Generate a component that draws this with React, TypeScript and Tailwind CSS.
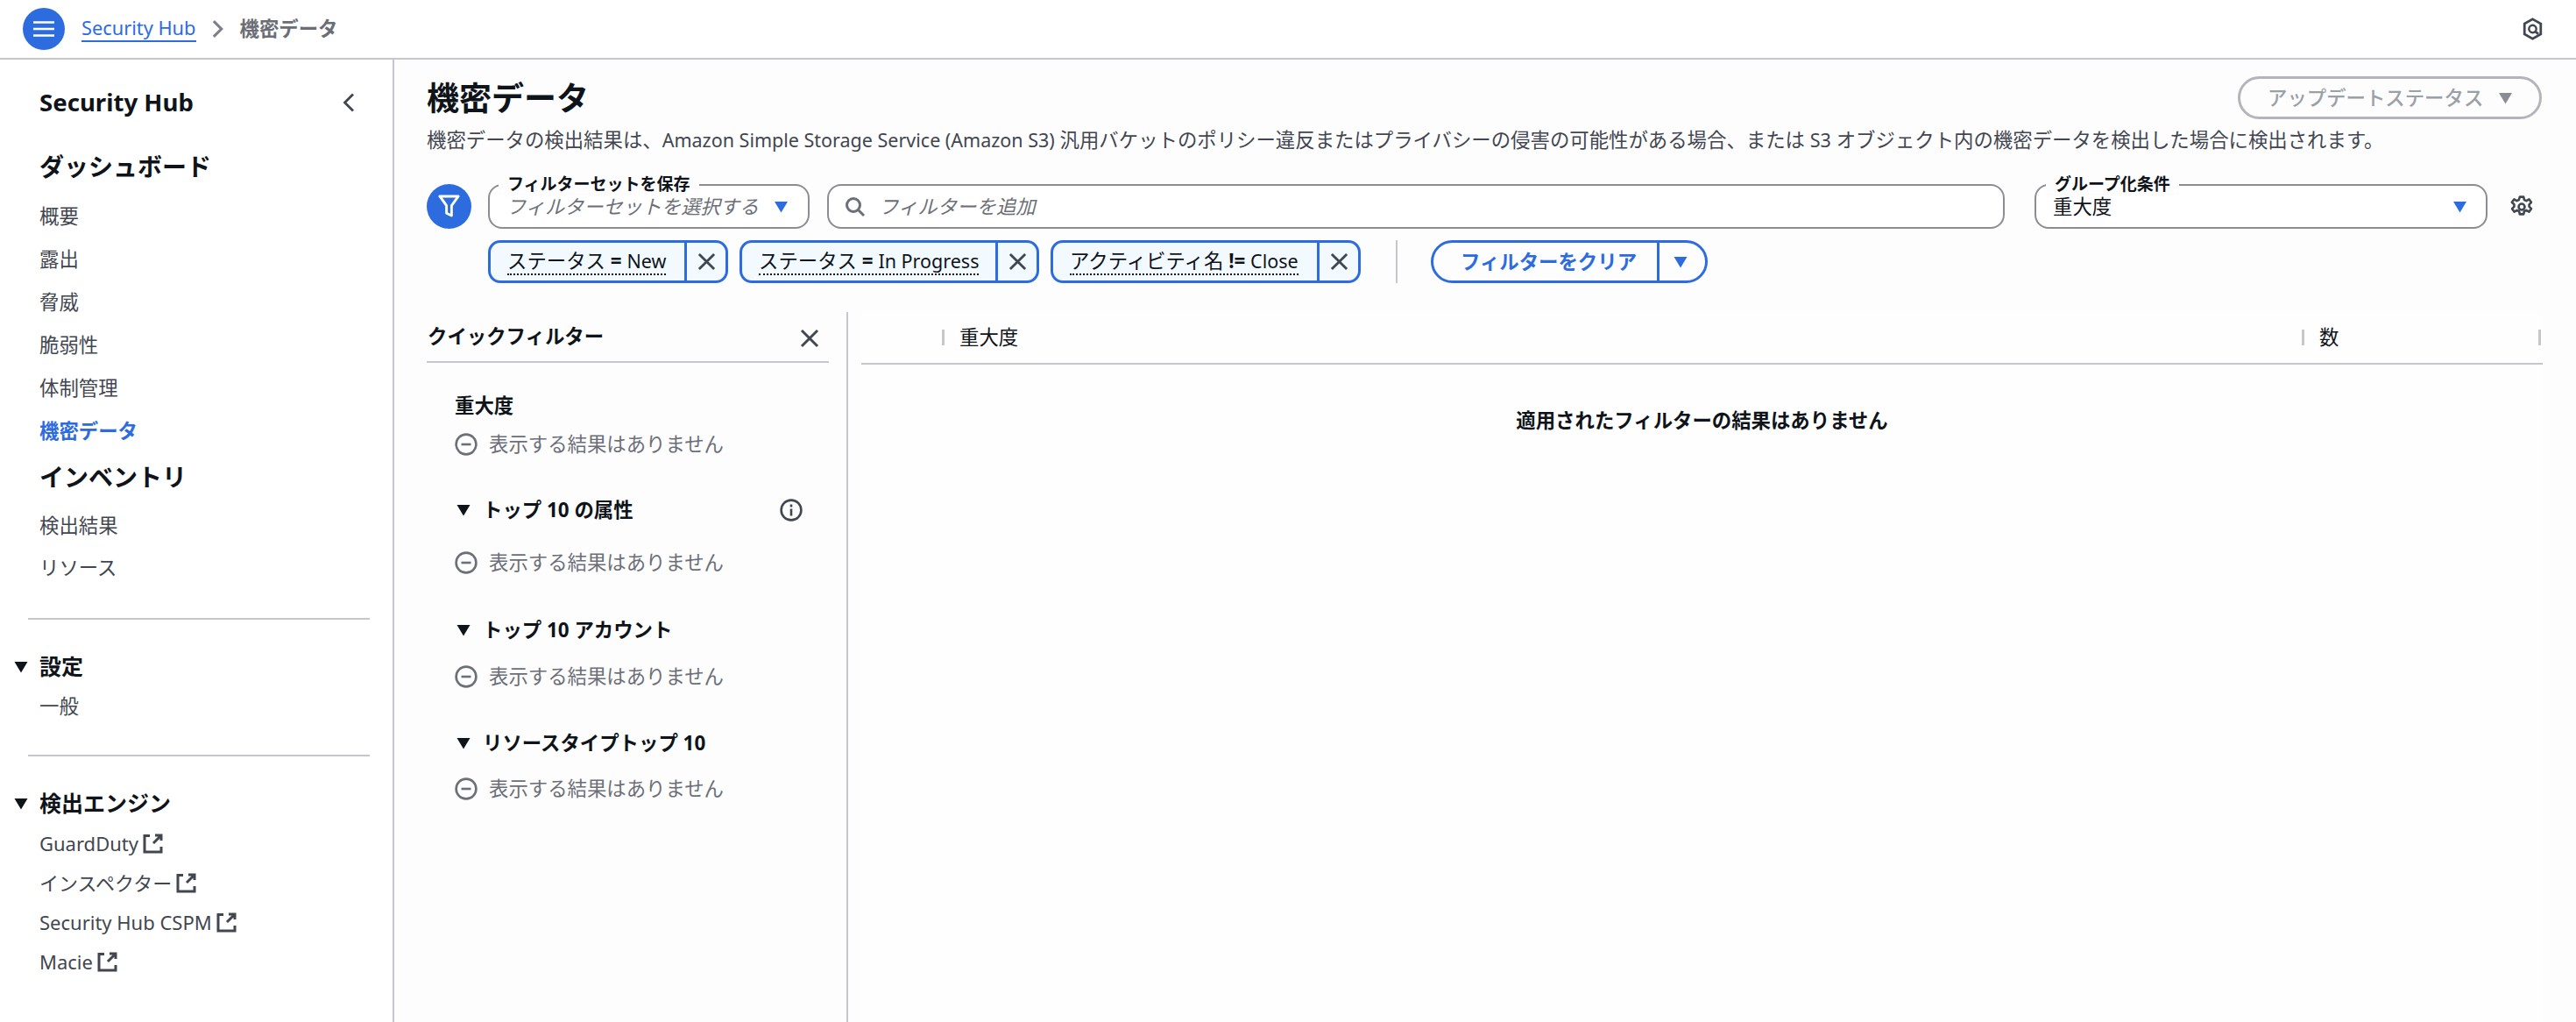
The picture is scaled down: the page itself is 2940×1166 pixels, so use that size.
import type { ReactNode } from 'react';

const blue = 'text-[#2d6cdf]';

const Caret = ({ className }: { className: string }) => (
  <svg viewBox="0 0 16 14" className={className} fill="currentColor">
    <path d="M0.5 1h15L8 13.5z" />
  </svg>
);

const CloseIcon = ({ className }: { className: string }) => (
  <svg viewBox="0 0 22 22" className={className} fill="none" stroke="currentColor" strokeWidth="3">
    <path d="M2 2l18 18M20 2L2 20" />
  </svg>
);

const ExternalIcon = () => (
  <svg viewBox="0 0 23 23" className="ml-[5px] h-[23px] w-[23px] shrink-0 text-[#424650]" fill="none" stroke="currentColor" strokeWidth="3">
    <path d="M8 2.5H2v18.5h19v-6M21 8V2h-7M21 2l-9 9" />
  </svg>
);

const MinusCircle = () => (
  <svg viewBox="0 0 26 26" className="h-[26px] w-[26px] shrink-0 text-[#6c6f78]" fill="none" stroke="currentColor" strokeWidth="2.6">
    <circle cx="13" cy="13" r="11.4" />
    <path d="M7.5 13h11" />
  </svg>
);

// latin runs sit a little narrower than the japanese text around them
const Latin = ({ children }: { children: ReactNode }) => <span className="text-[21.5px]">{children}</span>;

const NavLink = ({ children, active, tall }: { children: ReactNode; active?: boolean; tall?: boolean }) => (
  <div className={`flex items-center pl-[45px] text-[22.4px] ${tall ? 'h-[48px]' : 'h-[49px]'} ${active ? `font-bold ${blue}` : 'text-[#424650]'}`}>
    {children}
  </div>
);

const ExternalLink = ({ label }: { label: string }) => (
  <div className="flex h-[45px] items-center pl-[45px] text-[22px] text-[#424650]">
    {label}
    <ExternalIcon />
  </div>
);

const SectionTitle = ({ label }: { label: string }) => (
  <div className="flex h-[36px] items-center text-[25px] font-bold text-[#0f141a]">
    <Caret className="ml-[16px] mr-[13px] h-[14px] w-[16px]" />
    {label}
  </div>
);

const Sidebar = () => (
  <aside className="h-full w-[450px] shrink-0 border-r-2 border-[#c6c6cd] bg-white">
    <div className="mt-[31px] flex h-[36px] items-center justify-between pl-[45px] pr-[43px] text-[27.6px] font-bold text-[#0f141a]">
      Security Hub
      <svg viewBox="0 0 14 22" className="h-[22px] w-[14px] text-[#424650]" fill="none" stroke="currentColor" strokeWidth="2.8">
        <path d="M12 1.5L2.5 11l9.5 9.5" />
      </svg>
    </div>
    <div className="mt-[37px] flex h-[36px] items-center pl-[45px] text-[28px] font-bold text-[#0f141a]">ダッシュボード</div>
    <div className="mt-[14px]">
      <NavLink>概要</NavLink>
      <NavLink>露出</NavLink>
      <NavLink>脅威</NavLink>
      <NavLink>脆弱性</NavLink>
      <NavLink>体制管理</NavLink>
      <NavLink active>機密データ</NavLink>
    </div>
    <div className="mt-[10px] flex h-[36px] items-center pl-[45px] text-[28px] font-bold text-[#0f141a]">インベントリ</div>
    <div className="mt-[14px]">
      <NavLink tall>検出結果</NavLink>
      <NavLink tall>リソース</NavLink>
    </div>
    <div className="ml-[32px] mt-[33px] h-[2px] w-[390px] bg-[#c6c6cd]" />
    <div className="mt-[36px]">
      <SectionTitle label="設定" />
    </div>
    <div className="mt-[3px]">
      <NavLink tall>一般</NavLink>
    </div>
    <div className="ml-[32px] mt-[31px] h-[2px] w-[390px] bg-[#c6c6cd]" />
    <div className="mt-[36px]">
      <SectionTitle label="検出エンジン" />
    </div>
    <div className="mt-[5px]">
      <ExternalLink label="GuardDuty" />
      <ExternalLink label="インスペクター" />
      <ExternalLink label="Security Hub CSPM" />
      <ExternalLink label="Macie" />
    </div>
  </aside>
);

const FilterChip = ({ field, op, value, className }: { field: string; op: string; value: string; className: string }) => (
  <div className={`flex h-[49px] items-stretch rounded-[14px] border-[3px] border-[#2d6cdf] bg-[#f2faff] ${className}`}>
    <div className="flex min-w-0 flex-1 items-center whitespace-nowrap pl-[19px]">
      <span className="border-b-2 border-dotted border-[#0f141a] text-[22.4px] leading-[28px] text-[#0f141a]">
        {field} <span className="font-bold">{op}</span> <Latin>{value}</Latin>
      </span>
    </div>
    <div className="flex w-[47px] shrink-0 items-center justify-center border-l-[3px] border-[#2d6cdf]">
      <CloseIcon className="h-[21px] w-[21px] text-[#424650]" />
    </div>
  </div>
);

const QuickSection = ({ title, info, className }: { title: string; info?: boolean; className: string }) => (
  <div className={`flex h-[30px] items-center pr-[30px] text-[22.4px] font-bold text-[#0f141a] ${className}`}>
    <Caret className="ml-px mr-[13px] h-[14px] w-[18px]" />
    {title}
    {info && (
      <svg viewBox="0 0 26 26" className="ml-auto h-[26px] w-[26px] text-[#424650]" fill="none" stroke="currentColor" strokeWidth="2.6">
        <circle cx="13" cy="13" r="11.4" />
        <path d="M13 11.5v8M13 6.5v3" />
      </svg>
    )}
  </div>
);

const NoResults = ({ className }: { className: string }) => (
  <div className={`flex h-[30px] items-center gap-[13px] text-[22.4px] text-[#6c6f78] ${className}`}>
    <MinusCircle />
    表示する結果はありません
  </div>
);

const QuickFilters = () => (
  <div className="w-[481px] shrink-0 border-r-2 border-[#c6c6cd] pr-[20px]">
    <div className="flex h-[58px] items-center justify-between border-b-2 border-[#c6c6cd] pl-px pr-[11px] text-[22.4px] font-bold text-[#0f141a]">
      クイックフィルター
      <CloseIcon className="mt-[4px] h-[22px] w-[22px] text-[#424650]" />
    </div>
    <div className="pl-[32px]">
      <div className="mt-[34px] flex h-[30px] items-center text-[22.4px] font-bold text-[#0f141a]">重大度</div>
      <NoResults className="mt-[14px]" />
      <QuickSection title="トップ 10 の属性" info className="mt-[45px]" />
      <NoResults className="mt-[30px]" />
      <QuickSection title="トップ 10 アカウント" className="mt-[47px]" />
      <NoResults className="mt-[23px]" />
      <QuickSection title="リソースタイプトップ 10" className="mt-[46px]" />
      <NoResults className="mt-[22px]" />
    </div>
  </div>
);

const Tick = () => <div className="h-[18px] w-[3px] bg-[#c6c6cd]" />;

const ResultsTable = () => (
  <div className="ml-[15px] flex-1 bg-[#fefefe]">
    <div className="flex h-[60px] items-center border-b-2 border-[#c6c6cd] text-[22.4px] text-[#0f141a]">
      <div className="w-[92px]" />
      <Tick />
      <div className="w-[1549px] pl-[17px]">重大度</div>
      <Tick />
      <div className="w-[267px] pl-[17px]">数</div>
      <Tick />
    </div>
    <div className="mt-[49px] flex h-[30px] items-center justify-center text-[22.4px] font-bold text-[#0f141a]">
      適用されたフィルターの結果はありません
    </div>
  </div>
);

export default function App() {
  return (
    <div className="flex h-[1166px] w-full flex-col overflow-hidden bg-[#fdfdfe] font-['Noto_Sans','Noto_Sans_CJK_JP',sans-serif]">
      <header className="flex h-[68px] shrink-0 items-center border-b-2 border-[#c6c6cd] bg-white pl-[26px] pr-[38px]">
        <div className="flex h-[48px] w-[48px] items-center justify-center rounded-full bg-[#2d6cdf]">
          <svg viewBox="0 0 24 20" className="h-[20px] w-[24px] text-white" fill="none" stroke="currentColor" strokeWidth="2.6">
            <path d="M0 2.5h24M0 10h24M0 17.5h24" />
          </svg>
        </div>
        <span className={`ml-[19px] border-b-2 border-[#2d6cdf] text-[21.8px] leading-[28px] ${blue}`}>Security Hub</span>
        <svg viewBox="0 0 14 22" className="ml-[18px] h-[22px] w-[13px] text-[#7d8088]" fill="none" stroke="currentColor" strokeWidth="3.4">
          <path d="M2 1.5L11.5 11 2 20.5" />
        </svg>
        <span className="ml-[19px] text-[22.4px] font-bold text-[#6b6e76]">機密データ</span>
        <svg viewBox="0 0 24 28" className="ml-auto h-[26px] w-[23px] text-[#424650]" fill="none" stroke="currentColor" strokeWidth="3">
          <path d="M12 2l10 5.5v13L12 26 2 20.5v-13z" />
          <circle cx="12" cy="14" r="4.5" strokeWidth="2.6" />
          <path d="M15 17l4 3" />
        </svg>
      </header>

      <div className="flex min-h-0 flex-1">
        <Sidebar />
        <main className="flex min-w-0 flex-1 flex-col pl-[37px] pr-[38px]">
          <div className="flex items-start justify-between pt-[19px]">
            <h1 className="text-[37px] font-bold leading-[50px] text-[#0f141a]">機密データ</h1>
            <div className="mr-px flex h-[49px] w-[347px] items-center justify-between rounded-full border-[3px] border-[#b4b4bb] pl-[31px] pr-[30px] text-[22.4px] font-medium text-[#9ba0a6]">
              アップデートステータス
              <Caret className="h-[14px] w-[17px] text-[#8c8c94]" />
            </div>
          </div>
          <p className="h-[46px] whitespace-nowrap text-[22.4px] leading-[46px] text-[#424650]">
            機密データの検出結果は、<Latin>Amazon Simple Storage Service (Amazon S3)</Latin> 汎用バケットのポリシー違反またはプライバシーの侵害の可能性がある場合、または <Latin>S3</Latin> オブジェクト内の機密データを検出した場合に検出されます。
          </p>

          <div className="mt-[27px] flex h-[51px] items-center pr-[11px]">
            <div className="flex h-[51px] w-[51px] shrink-0 items-center justify-center rounded-full bg-[#2d6cdf]">
              <svg viewBox="0 0 26 28" className="h-[27px] w-[25px] text-white" fill="none" stroke="currentColor" strokeWidth="3">
                <path d="M2 2h22l-8 11v12l-6-3v-9z" strokeLinejoin="round" />
              </svg>
            </div>
            <div className="relative ml-[19px] flex h-[51px] w-[367px] shrink-0 items-center rounded-[16px] border-2 border-[#8c8c94] bg-white pl-[19px] pr-[22px]">
              <span className="absolute -top-[15px] left-[10px] bg-[#fdfdfe] px-[10px] text-[19px] font-bold leading-[26px] text-[#0f141a]">フィルターセットを保存</span>
              <span className="flex-1 text-[22.2px] italic text-[#6c6f78]">フィルターセットを選択する</span>
              <Caret className={`h-[14px] w-[17px] ${blue}`} />
            </div>
            <div className="ml-[20px] flex h-[51px] flex-1 items-center rounded-[16px] border-2 border-[#8c8c94] bg-white pl-[18px]">
              <svg viewBox="0 0 24 24" className="h-[24px] w-[24px] text-[#6c6f78]" fill="none" stroke="currentColor" strokeWidth="3">
                <circle cx="10" cy="10" r="7.5" />
                <path d="M15.5 15.5L22 22" />
              </svg>
              <span className="ml-[15px] text-[22.4px] italic text-[#6c6f78]">フィルターを追加</span>
            </div>
            <div className="relative ml-[34px] flex h-[51px] w-[517px] shrink-0 items-center rounded-[16px] border-2 border-[#8c8c94] bg-white pl-[19px] pr-[21px]">
              <span className="absolute -top-[15px] left-[11px] bg-[#fdfdfe] px-[10px] text-[19px] font-bold leading-[26px] text-[#0f141a]">グループ化条件</span>
              <span className="flex-1 text-[22.4px] text-[#0f141a]">重大度</span>
              <Caret className={`h-[14px] w-[17px] ${blue}`} />
            </div>
            <svg viewBox="0 0 24 24" className="ml-[26px] h-[26px] w-[26px] shrink-0 text-[#424650]" fill="none" stroke="currentColor" strokeWidth="2.4" strokeLinejoin="round">
              <path d="M10 1.5h4l.7 3.1 2.2 1 2.8-1.6 2.4 3.2-2.2 2.3v2.2l2.2 2.3-2.4 3.2-2.8-1.6-2.2 1-.7 3.1h-4l-.7-3.1-2.2-1-2.8 1.6-2.4-3.2 2.2-2.3V9.5L1.7 7.2l2.4-3.2 2.8 1.6 2.2-1z" />
              <circle cx="12" cy="12" r="3.2" />
            </svg>
          </div>

          <div className="ml-[70px] mt-[13px] flex h-[49px] items-stretch gap-[13px]">
            <FilterChip field="ステータス" op="=" value="New" className="w-[274px]" />
            <FilterChip field="ステータス" op="=" value="In Progress" className="w-[342px]" />
            <FilterChip field="アクティビティ名" op="!=" value="Close" className="w-[354px]" />
            <div className="ml-[27px] mr-[25px] w-[2px] bg-[#c6c6cd]" />
            <div className={`flex rounded-full border-[3px] border-[#2d6cdf] text-[22.4px] font-bold ${blue}`}>
              <div className="flex w-[258px] items-center justify-center border-r-[3px] border-[#2d6cdf] pl-[8px]">フィルターをクリア</div>
              <div className="flex w-[52px] items-center justify-center pr-[4px]">
                <Caret className="h-[14px] w-[16px]" />
              </div>
            </div>
          </div>

          <div className="mt-[33px] flex min-h-0 flex-1">
            <QuickFilters />
            <ResultsTable />
          </div>
        </main>
      </div>
    </div>
  );
}
